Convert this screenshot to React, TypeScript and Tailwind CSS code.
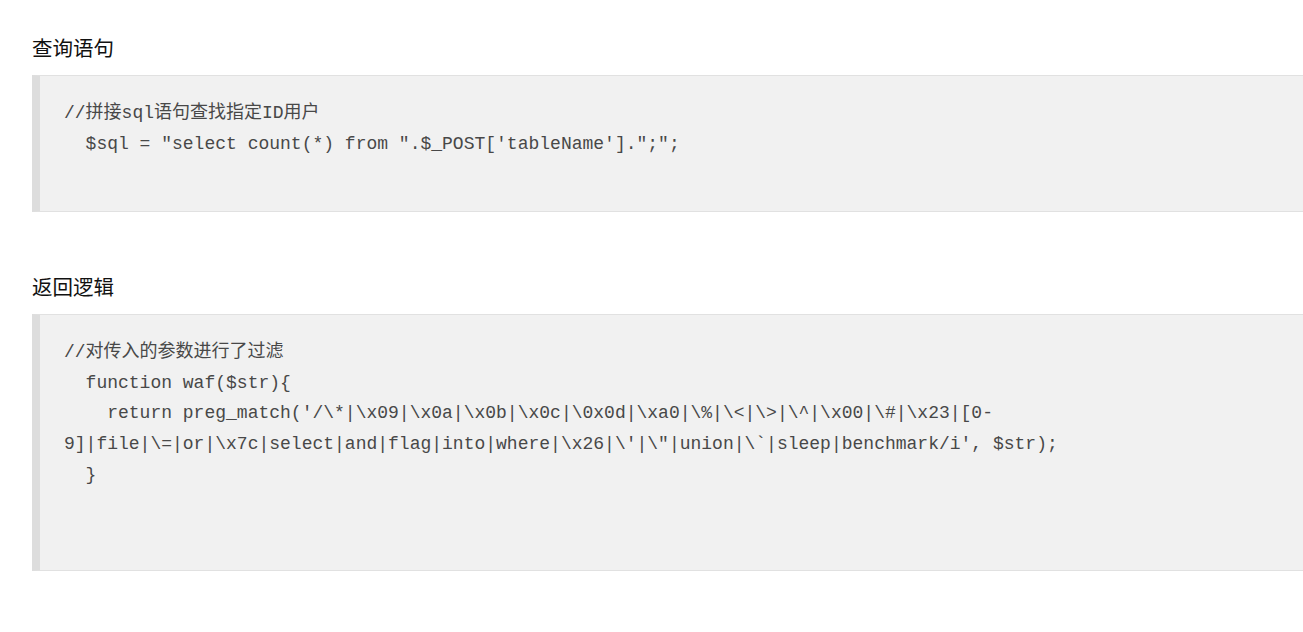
import React from "react";

function Block({ lines, extra }: { lines: string[]; extra?: boolean }) {
  return (
    <div className="ml-[32px] border-l-[8px] border-l-[#dddddd] border-y border-y-[#e1e1e1] bg-[#f1f1f1] pl-[24px] pr-6 pt-[22px] pb-[52px] text-[18px] leading-[30.6px] text-[#484848] font-['Liberation_Mono','Noto_Sans_CJK_SC',monospace]">
      {lines.map((l, i) => (
        <div key={i} className="whitespace-pre">
          {l}
        </div>
      ))}
      {extra && <div className="h-[28px]" />}
    </div>
  );
}

export default function App() {
  return (
    <div className="min-h-[632px] w-full overflow-hidden bg-white pt-[33px] pb-10">
      <h2 className="ml-[32px] text-[20.5px] leading-[28px] text-[#111111] font-['Noto_Sans_CJK_SC','Noto_Sans',sans-serif]">
        查询语句
      </h2>
      <div className="mt-[14px]">
        <Block
          lines={[
            "//拼接sql语句查找指定ID用户",
            "  $sql = \"select count(*) from \".$_POST['tableName'].\";\";",
          ]}
        />
      </div>
      <h2 className="ml-[32px] mt-[60px] text-[20.5px] leading-[28px] text-[#111111] font-['Noto_Sans_CJK_SC','Noto_Sans',sans-serif]">
        返回逻辑
      </h2>
      <div className="mt-[14px]">
        <Block
          extra
          lines={[
            "//对传入的参数进行了过滤",
            "  function waf($str){",
            "    return preg_match('/\\*|\\x09|\\x0a|\\x0b|\\x0c|\\0x0d|\\xa0|\\%|\\<|\\>|\\^|\\x00|\\#|\\x23|[0-",
            "9]|file|\\=|or|\\x7c|select|and|flag|into|where|\\x26|\\'|\\\"|union|\\`|sleep|benchmark/i', $str);",
            "  }",
          ]}
        />
      </div>
    </div>
  );
}
